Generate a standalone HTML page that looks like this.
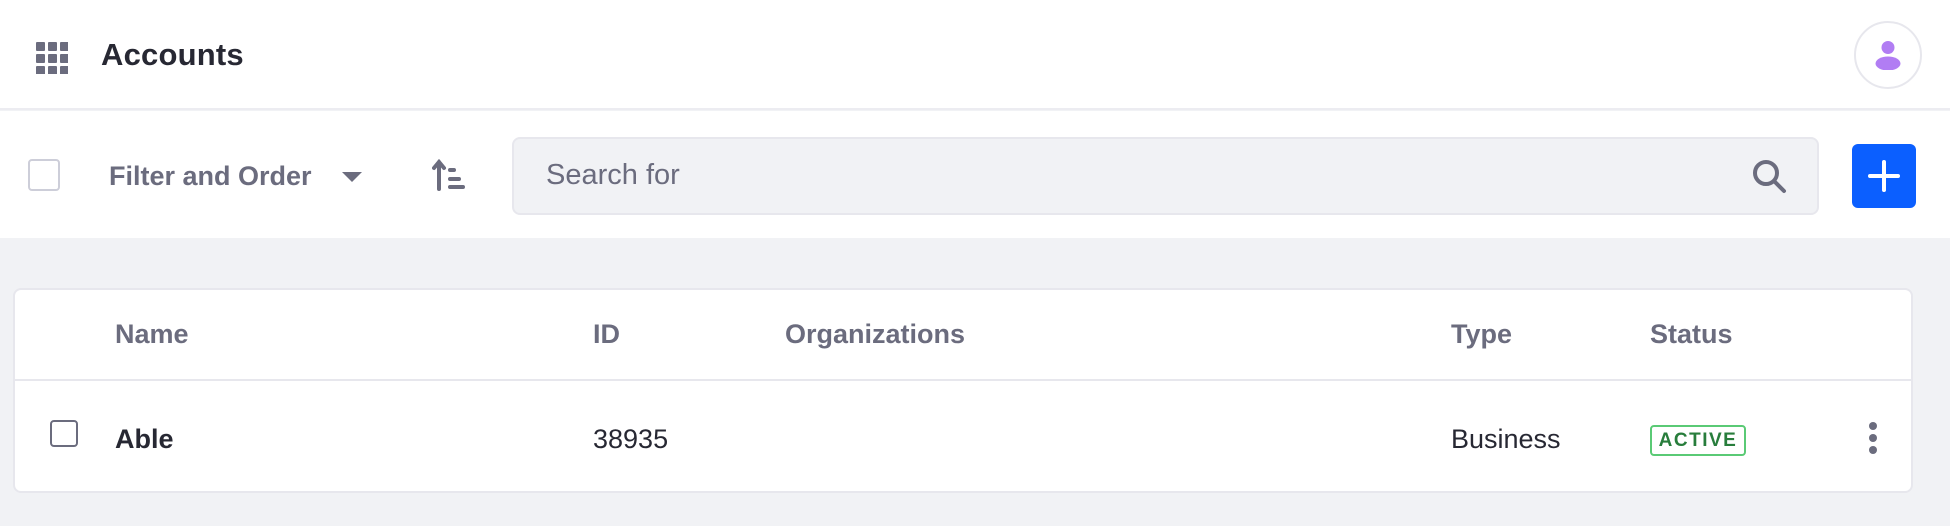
<!DOCTYPE html>
<html><head><meta charset="utf-8"><style>
*{box-sizing:border-box;margin:0;padding:0}
body{width:1950px;height:526px;background:#f1f2f5;font-family:"Liberation Sans",sans-serif;position:relative;overflow:hidden}
.a{position:absolute}
.hdr{left:0;top:0;width:1950px;height:110px;background:#fff;border-bottom:2px solid #ececf1}
.tb{left:0;top:111px;width:1950px;height:127px;background:#fff}
.g{color:#6b6c7e;font-weight:bold}
</style></head><body>
<div class="a hdr"></div>
<div class="a tb"></div>
<svg class="a" style="left:36px;top:42px" width="32" height="32" viewBox="0 0 32 32" fill="#6b6c7e">
<rect x="0" y="0" width="9" height="9" rx="1"/><rect x="12" y="0" width="9" height="9" rx="1"/><rect x="24" y="0" width="9" height="9" rx="1"/>
<rect x="0" y="12" width="9" height="9" rx="1"/><rect x="12" y="12" width="9" height="9" rx="1"/><rect x="24" y="12" width="9" height="9" rx="1"/>
<rect x="0" y="24" width="9" height="9" rx="1"/><rect x="12" y="24" width="9" height="9" rx="1"/><rect x="24" y="24" width="9" height="9" rx="1"/></svg>
<div class="a" style="left:101px;top:37px;font-size:31px;font-weight:bold;color:#272833;letter-spacing:0.2px">Accounts</div>
<div class="a" style="left:1854px;top:21px;width:68px;height:68px;border:2px solid #e7e7ed;border-radius:50%;background:#fff"></div>
<svg class="a" style="left:1874px;top:40px" width="28" height="30" viewBox="0 0 28 30" fill="#b17df3"><circle cx="14" cy="7.5" r="6.5"/><ellipse cx="14" cy="23.5" rx="12.5" ry="7"/></svg>

<div class="a" style="left:28px;top:159px;width:32px;height:32px;border:2px solid #cdced9;border-radius:4px;background:#fff"></div>
<div class="a g" style="left:109px;top:161px;font-size:27px">Filter and Order</div>
<svg class="a" style="left:342px;top:172px" width="20" height="10"><path d="M0 0H20L10 10Z" fill="#6b6c7e"/></svg>
<svg class="a" style="left:432px;top:159px" width="34" height="32" viewBox="0 0 34 32" fill="none" stroke="#6b6c7e" stroke-width="4" stroke-linecap="round"><path d="M7 30V3M2 9L7 3L12 9"/><path d="M18 11H22M18 20H27M18 28H31"/></svg>
<div class="a" style="left:512px;top:137px;width:1307px;height:78px;background:#f1f2f5;border:2px solid #e7e7ed;border-radius:8px"></div>
<div class="a" style="left:546px;top:159px;font-size:29px;color:#6b6c7e">Search for</div>
<svg class="a" style="left:1752px;top:159px" width="36" height="35" viewBox="0 0 36 35" fill="none" stroke="#6b6c7e" stroke-width="4" stroke-linecap="round"><circle cx="14" cy="14" r="11"/><path d="M22 22L32 32"/></svg>
<div class="a" style="left:1852px;top:144px;width:64px;height:64px;background:#0b5fff;border-radius:6px"></div>
<svg class="a" style="left:1868px;top:160px" width="32" height="32"><path d="M16 2V30M2 16H30" stroke="#fff" stroke-width="4" stroke-linecap="round"/></svg>

<div class="a" style="left:13px;top:288px;width:1900px;height:205px;background:#fff;border:2px solid #e7e7ed;border-radius:8px"></div>
<div class="a" style="left:14px;top:379px;width:1898px;height:2px;background:#e7e7ed"></div>
<div class="a g" style="left:115px;top:319px;font-size:27px">Name</div>
<div class="a g" style="left:593px;top:319px;font-size:27px">ID</div>
<div class="a g" style="left:785px;top:319px;font-size:27px">Organizations</div>
<div class="a g" style="left:1451px;top:319px;font-size:27px">Type</div>
<div class="a g" style="left:1650px;top:319px;font-size:27px">Status</div>
<div class="a" style="left:50px;top:420px;width:28px;height:27px;border:2px solid #6b6c7e;border-radius:4px;background:#fff"></div>
<div class="a" style="left:115px;top:424px;font-size:27px;font-weight:bold;color:#272833">Able</div>
<div class="a" style="left:593px;top:424px;font-size:27px;color:#272833">38935</div>
<div class="a" style="left:1451px;top:424px;font-size:27px;color:#272833">Business</div>
<div class="a" style="left:1650px;top:425px;width:96px;height:31px;border:2px solid #5aca75;border-radius:4px;color:#287d3c;font-size:19px;font-weight:bold;text-align:center;line-height:27px;letter-spacing:1.5px">ACTIVE</div>
<svg class="a" style="left:1866px;top:421px" width="14" height="34" fill="#6b6c7e"><circle cx="7" cy="5" r="4"/><circle cx="7" cy="17" r="4"/><circle cx="7" cy="29" r="4"/></svg>
</body></html>
